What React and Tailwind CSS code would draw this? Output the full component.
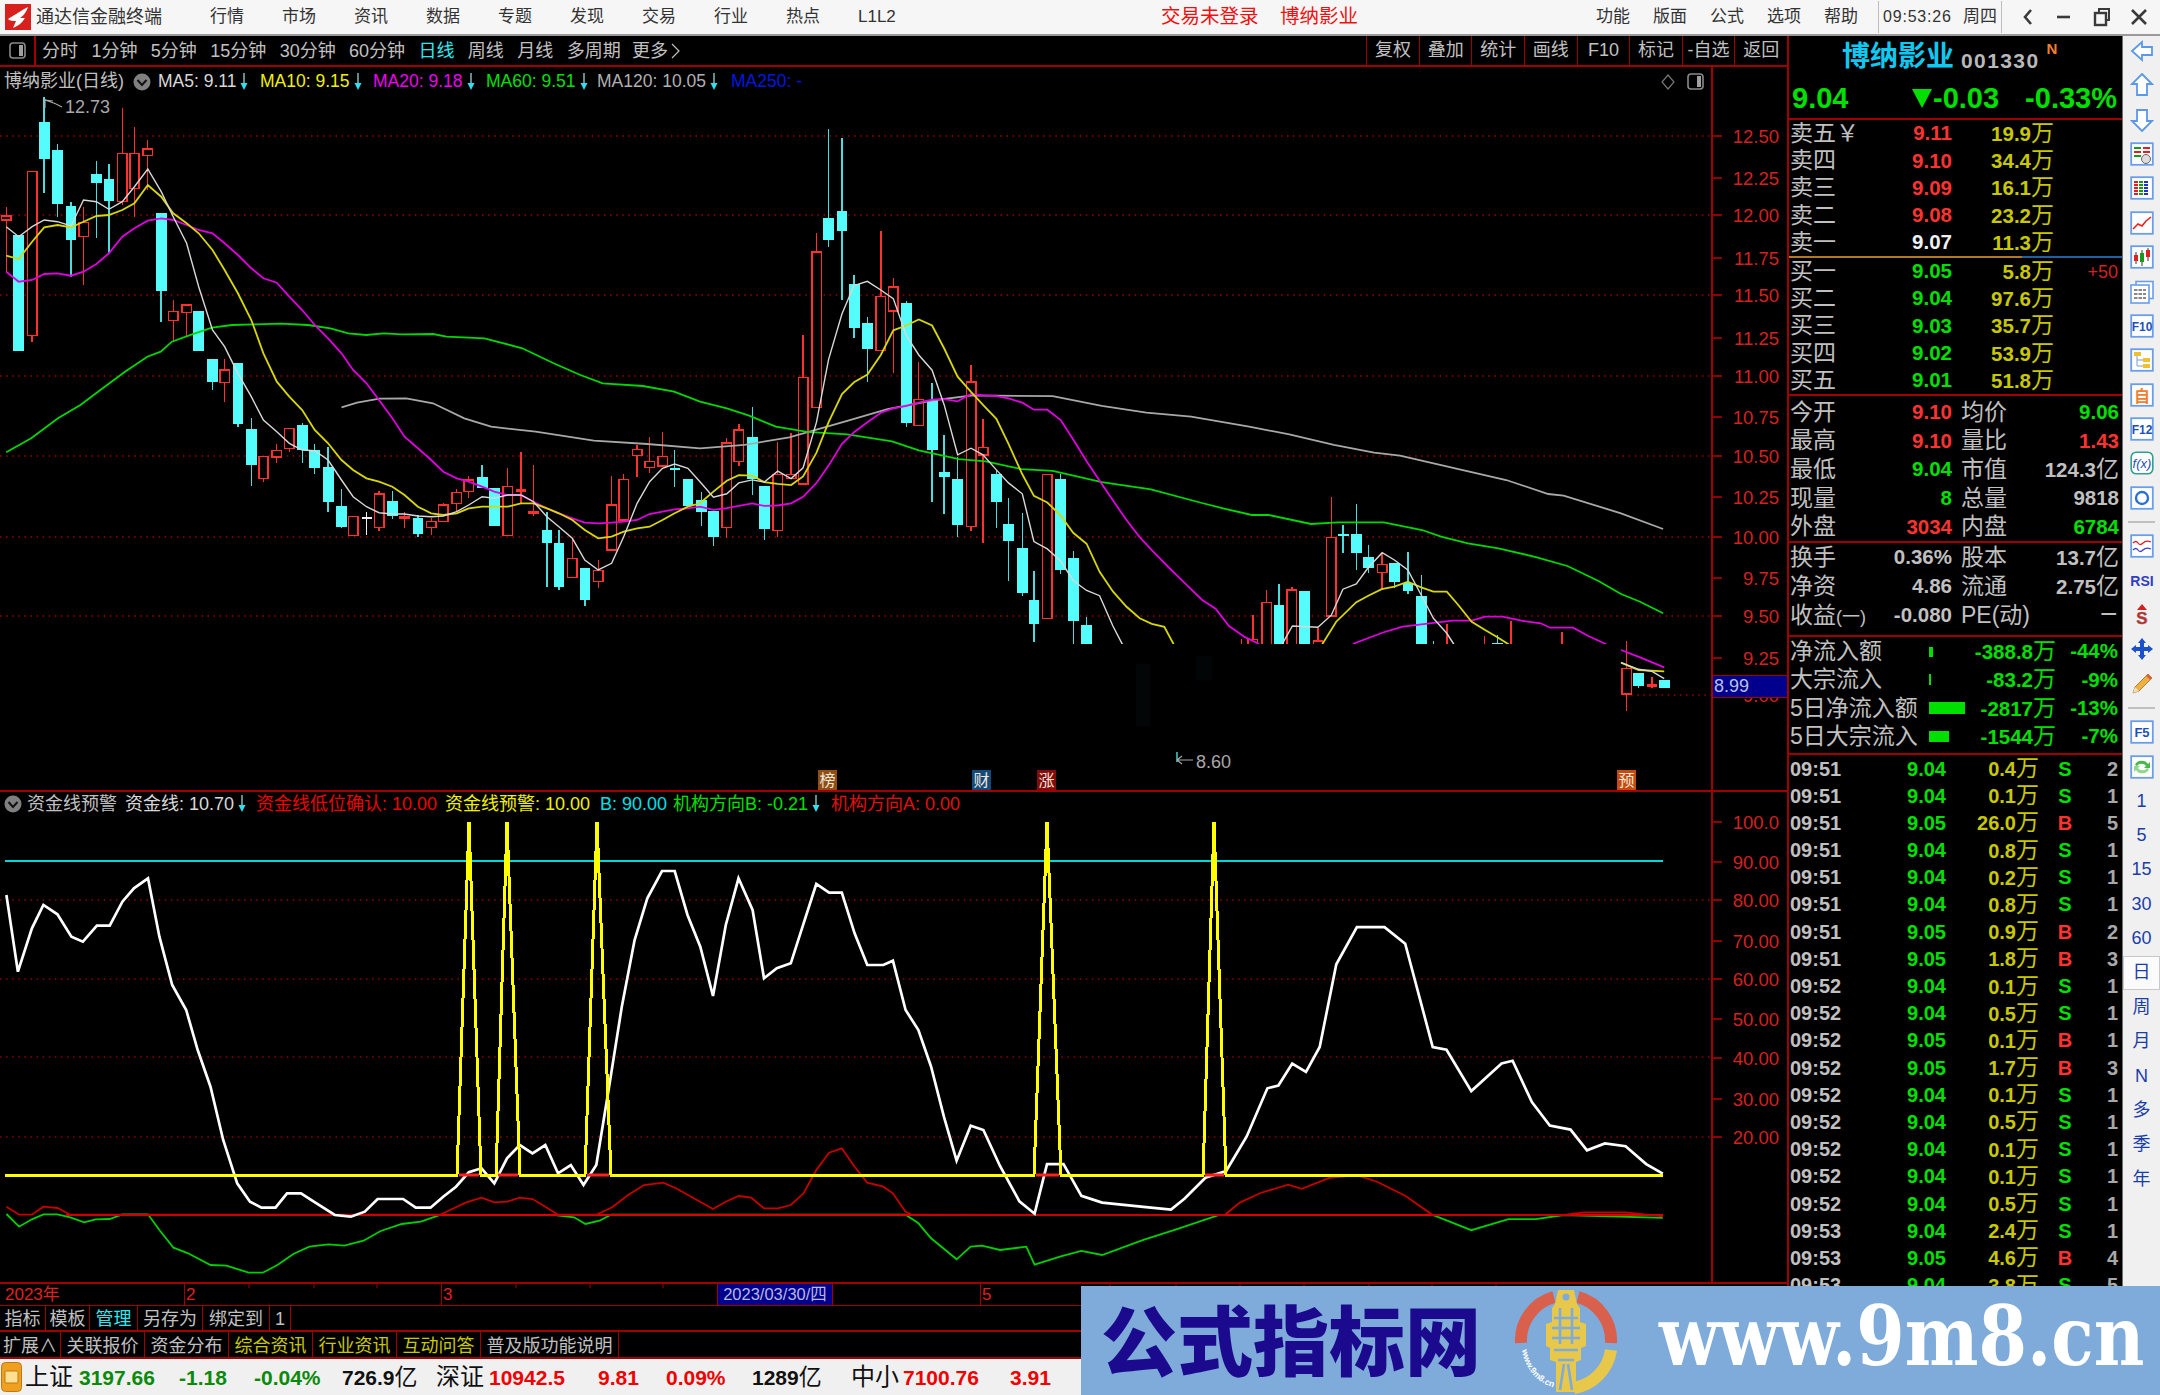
import React from "react";

const z8 = (a) => a.map(([x, y]) => [x / 2.24, 90 + y / 3]);
const z9 = (a) => a.map(([x, y]) => [700 + x / 2.24, 110 + y / 2.306]);
const z11 = (a) => a.map(([x, y]) => [1200 + x / 2.613, 480 + y / 3]);
const z12 = (a) => a.map(([x, y]) => [x / 1.568, 800 + y / 3]);
const sm = (a) => a.map(([x, y]) => [x * 1.3776, y * 1.3776]);
const pts = (a) => a.map(([x, y]) => `${x.toFixed(1)},${y.toFixed(1)}`).join(" ");

// x, high, top, bottom, low, colour
const c8 = [
  [14,352,378,390,545,"r"],[42,435,435,783,783,"c"],[72,245,245,737,755,"r"],[99,20,95,206,310,"c"],[129,162,181,342,382,"c"],[159,335,348,450,562,"c"],[187,350,398,440,585,"r"],[216,212,252,279,445,"c"],[244,222,266,333,490,"c"],[274,55,191,335,345,"r"],[301,110,191,295,382,"r"],[331,150,177,196,300,"r"],[361,370,370,603,697,"c"],[388,630,664,691,755,"r"],[418,645,645,668,740,"r"],[445,662,662,783,783,"c"],[476,807,807,877,900,"c"],[503,808,840,877,935,"r"],[533,820,820,1003,1012,"c"],[563,983,1018,1125,1188,"c"],[590,1100,1100,1166,1175,"r"],[620,1063,1082,1101,1120,"r"],[648,1015,1015,1075,1085,"r"],[677,1000,1004,1081,1120,"c"],[705,1063,1081,1134,1152,"c"],[735,1072,1131,1237,1265,"c"],[765,1198,1248,1310,1315,"c"],[791,1280,1280,1336,1336,"r"],[821,1265,1285,1285,1336,"w"],[849,1203,1212,1313,1322,"r"],[879,1202,1234,1278,1287,"c"],[906,1265,1282,1282,1314,"r"],[936,1275,1284,1333,1340,"c"],[966,1285,1295,1312,1335,"r"],[993,1240,1245,1295,1295,"r"],[1023,1197,1208,1241,1267,"r"],[1050,1158,1170,1204,1225,"r"],[1080,1125,1162,1193,1193,"c"],[1107,1194,1194,1308,1308,"c"],[1137,1135,1190,1336,1336,"r"],[1167,1085,1200,1200,1240,"r"],[1195,1125,1265,1265,1278,"r"],[1225,1265,1320,1358,1490,"c"],[1252,1320,1360,1490,1500,"c"],[1282,1345,1406,1462,1465,"r"],[1310,1433,1433,1530,1548,"c"],[1340,1410,1442,1475,1495,"r"],[1370,1158,1245,1380,1380,"r"],[1397,1152,1168,1290,1290,"r"],[1427,1065,1078,1097,1160,"r"],[1455,1040,1115,1132,1148,"r"],[1484,1027,1100,1128,1130,"r"],[1511,1080,1136,1136,1192,"c"],[1541,1167,1167,1247,1252,"c"],
];
const c9 = [
  [3,880,900,926,960,"c"],[30,925,925,985,1005,"c"],[60,757,768,963,988,"r"],[87,725,738,810,822,"r"],[117,685,754,850,888,"c"],[144,867,867,967,992,"c"],[174,765,840,970,985,"r"],[204,745,840,850,850,"r"],[231,518,617,862,862,"r"],[261,283,328,686,686,"r"],[288,44,249,300,317,"c"],[318,65,232,278,437,"c"],[345,380,401,503,525,"c"],[375,477,491,551,628,"c"],[405,280,430,555,555,"r"],[433,387,408,464,607,"r"],[462,440,446,722,732,"c"],[490,580,668,728,728,"r"],[520,630,668,784,905,"c"],[547,750,834,846,932,"c"],[577,800,851,957,985,"c"],[607,588,627,960,970,"r"],[634,712,778,796,998,"r"],[664,830,840,905,964,"c"],[691,895,955,995,1085,"c"],[722,930,1010,1113,1120,"c"],[748,1062,1131,1185,1227,"c"],[778,841,841,1173,1173,"r"],[808,840,851,1060,1070,"c"],[836,1017,1034,1178,1240,"c"],[866,1168,1187,1260,1260,"c"],
];
const c11 = [
  [108,478,500,500,500,"r"],[138,405,478,510,510,"r"],[174,330,367,510,510,"r"],[206,312,375,510,510,"c"],[240,320,330,510,510,"r"],[272,334,334,510,510,"c"],[308,445,483,510,510,"r"],[343,50,173,408,408,"r"],[374,135,164,164,220,"c"],[409,72,163,220,270,"c"],[441,195,231,265,280,"c"],[476,218,254,277,330,"r"],[508,249,249,306,325,"c"],[543,217,308,332,342,"c"],[578,285,347,510,510,"c"],[610,483,510,510,510,"c"],[645,432,510,510,510,"r"],[743,468,510,510,510,"r"],[778,465,488,510,510,"c"],[813,424,510,510,510,"r"],[946,455,510,510,510,"r"],[1115,482,565,642,692,"r"],[1146,578,578,617,625,"c"],[1181,590,616,616,625,"r"],[1213,600,600,625,625,"c"],
];
const cx = (a, fx, fy) => a.map(([x, h, t, b, l, k]) => ({ x: fx(x), h: fy(h), t: fy(t), b: fy(b), l: fy(l), k }));
const candles = [
  ...cx(c8, (x) => x / 2.24, (y) => 90 + y / 3),
  ...cx(c9, (x) => 700 + x / 2.24, (y) => 110 + y / 2.306),
  ...cx(c11, (x) => 1200 + x / 2.613, (y) => 480 + y / 3),
];

const ma5 = [
  [...z8([[14,410],[42,440],[72,410],[99,390],[129,395],[159,408],[187,330],[216,335],[244,358],[274,335],[301,290],[331,237],[361,305],[388,380],[418,460],[445,590],[476,720],[503,770],[533,850],[563,920],[590,990],[620,1025],[648,1060],[677,1080],[705,1082],[735,1110],[765,1170],[791,1220],[821,1250],[849,1268],[879,1272],[906,1272],[936,1278],[966,1280],[993,1278],[1023,1265],[1050,1245],[1080,1220],[1107,1225],[1137,1215],[1167,1215],[1195,1235],[1225,1280],[1252,1310],[1282,1345],[1310,1410],[1340,1440],[1370,1420],[1397,1340],[1427,1240],[1455,1175],[1484,1135],[1511,1122],[1541,1135],[1568,1175]]),
   ...z9([[30,893],[60,885],[87,860],[117,853],[144,858],[174,833],[204,850],[231,825],[261,720],[288,575],[318,470],[345,405],[375,395],[405,415],[433,435],[462,520],[490,565],[520,600],[547,680],[577,795],[607,780],[634,795],[664,830],[691,860],[722,885],[748,995],[778,1012],[808,1040],[836,1085],[866,1108],[895,1120],[925,1190],[945,1230],[960,1260]])],
  [...z9([[1290,1260],[1305,1230],[1327,1190],[1384,1193],[1414,1165],[1440,1105],[1470,1093],[1497,1055]]),
   ...z11([[476,218],[508,240],[543,270],[578,345],[610,415],[645,460],[663,492],[675,510]])],
  z11([[1100,548],[1146,568],[1181,574],[1213,596]]),
];
const ma10 = [
  [...z8([[14,497],[42,507],[72,455],[99,412],[129,405],[159,412],[187,395],[216,378],[244,375],[274,360],[301,340],[331,285],[361,320],[388,370],[418,400],[445,430],[476,480],[503,540],[533,610],[563,690],[590,790],[620,875],[648,920],[677,960],[705,1020],[735,1060],[765,1110],[791,1140],[821,1165],[849,1175],[879,1190],[906,1215],[936,1250],[966,1270],[993,1275],[1023,1270],[1050,1255],[1080,1250],[1107,1250],[1137,1250],[1167,1240],[1195,1240],[1225,1255],[1252,1270],[1282,1290],[1310,1320],[1340,1345],[1370,1340],[1397,1325],[1427,1315],[1455,1310],[1484,1290],[1511,1270],[1541,1250],[1568,1240]]),
   ...z9([[30,880],[60,855],[87,842],[117,843],[144,858],[174,862],[204,865],[231,845],[261,790],[288,720],[318,655],[345,628],[375,610],[405,565],[433,508],[462,497],[490,483],[520,497],[547,550],[577,615],[607,650],[634,680],[664,712],[691,770],[722,840],[748,890],[778,905],[808,935],[836,975],[866,1000],[895,1065],[925,1110],[955,1145],[985,1172],[1012,1185],[1040,1192],[1060,1230],[1070,1260]])],
  [...z9([[1380,1260],[1395,1230],[1425,1180],[1470,1135],[1497,1120],[1527,1105]]),
   ...z11([[508,320],[543,305],[578,322],[610,335],[645,335],[675,375],[710,425],[745,450],[775,470],[805,492],[825,510]])],
  z11([[1100,548],[1146,570],[1213,574]]),
];
const ma20 = [
  [...z8([[14,545],[42,575],[72,570],[99,552],[129,550],[159,557],[187,545],[216,522],[244,490],[274,440],[301,415],[331,392],[361,385],[388,390],[418,405],[445,420],[476,430],[503,460],[533,495],[563,535],[590,565],[620,578],[648,620],[677,660],[705,705],[735,745],[765,790],[791,840],[821,880],[849,930],[879,985],[906,1040],[936,1075],[966,1110],[993,1145],[1023,1165],[1050,1175],[1080,1190],[1107,1205],[1137,1215],[1167,1215],[1195,1235],[1225,1255],[1252,1270],[1282,1285],[1310,1298],[1340,1300],[1370,1298],[1397,1295],[1427,1290],[1455,1272],[1484,1265],[1511,1258],[1541,1255],[1568,1250]]),
   ...z9([[30,922],[60,918],[117,907],[144,913],[174,912],[204,907],[231,892],[261,860],[288,820],[318,770],[345,743],[375,720],[405,698],[433,688],[462,682],[490,675],[520,668],[547,667],[577,672],[607,655],[634,658],[664,660],[691,665],[722,675],[748,691],[778,691],[808,715],[836,760],[866,810],[895,855],[925,900],[955,945],[985,985],[1012,1015],[1050,1055],[1090,1095],[1125,1130],[1155,1150],[1185,1190],[1220,1215],[1250,1230],[1280,1260]])],
  [...z9([[1440,1260],[1465,1230],[1530,1205]]),
   ...z11([[530,440],[600,430],[660,422],[710,422],[745,410],[790,410],[840,422],[890,430],[915,443],[975,443],[1015,468],[1060,492],[1090,510]])],
  z11([[1100,510],[1150,532],[1213,562]]),
];
const ma60 = [[...z8([[14,1087],[70,1045],[130,985],[180,945],[230,895],[280,845],[330,800],[360,785],[385,755],[430,733],[475,713],[520,705],[570,703],[630,701],[690,705],[740,715],[780,730],[820,735],[860,730],[900,733],[970,732],[1000,740],[1085,745],[1170,775],[1240,820],[1300,855],[1350,880],[1440,888],[1510,905],[1568,935]]),
  ...z9([[60,688],[110,705],[170,730],[240,742],[330,748],[430,764],[490,785],[580,805],[640,810],[720,828],[790,832],[900,858],[1010,875],[1120,905]]),
  ...z11([[60,85],[135,105],[180,105],[290,132],[360,127],[480,127],[580,150],[630,170],[700,190],[780,205],[880,232],[960,258],[1040,302],[1100,342],[1150,365],[1210,400]])]];
const ma120 = [[...z8([[765,952],[800,938],[850,926],[910,925],[970,940],[1040,985],[1100,1010],[1200,1025],[1330,1052],[1450,1062],[1568,1075]]),
  ...z9([[100,772],[200,755],[320,720],[420,690],[520,670],[610,658],[790,660],[900,682],[1000,698],[1100,707],[1230,730],[1320,748],[1420,772],[1510,790],[1568,797]]),
  ...z11([[800,0],[910,42],[950,47],[1100,100],[1210,147]])]];

const iWhite = [...z12([[10,285],[28,515],[50,385],[68,315],[90,343],[112,410],[130,425],[152,377],[172,377],[192,305],[210,265],[232,235],[250,410],[270,555],[292,630],[310,750],[330,860],[350,1020],[372,1150],[392,1205],[410,1223],[432,1223],[450,1180],[472,1180],[492,1205],[525,1245],[550,1250],[572,1235],[592,1197],[632,1197],[652,1223],[675,1223],[695,1190],[715,1160],[735,1117],[755,1105],[775,1150],[795,1075],[815,1035],[835,1060],[855,1035],[875,1120],[895,1095],[915,1155],[935,1095],[955,860],[975,620],[995,420],[1015,295],[1038,213],[1058,213],[1078,345],[1098,440],[1118,588],[1138,375],[1158,235],[1180,330],[1198,535],[1218,505],[1240,490],[1260,370],[1280,252],[1300,278],[1320,278],[1340,400],[1360,495],[1385,495],[1400,482],[1420,630],[1440,690],[1460,800],[1480,950],[1500,1082],[1522,977],[1542,990],[1568,1098]]),
  ...sm([[740,872],[751,881],[760,845],[772,845],[785,868],[800,873],[830,876],[850,878],[860,870],[875,855],[890,850],[905,825],[920,790],[928,788],[938,772],[948,778],[958,760],[970,700],[985,673],[1005,673],[1020,685],[1040,760],[1050,762],[1068,792],[1090,772],[1098,770],[1112,800],[1125,817],[1140,820],[1152,835],[1165,830],[1180,832],[1195,845],[1207,852]])];
const iRed = [...z12([[10,1220],[30,1244],[50,1244],[68,1220],[90,1224],[110,1244],[690,1244],[700,1235],[730,1208],[755,1193],[775,1207],[795,1205],[815,1193],[835,1197],[855,1220],[875,1244],[935,1244],[960,1222],[985,1185],[1010,1155],[1040,1148],[1060,1165],[1118,1227],[1138,1205],[1158,1188],[1178,1193],[1198,1225],[1220,1225],[1240,1215],[1260,1180],[1280,1110],[1300,1058],[1320,1045],[1340,1100],[1360,1148],[1385,1160],[1400,1180],[1420,1235],[1430,1244]]),
  ...sm([[889,882],[900,873],[915,866],[935,860],[945,863],[965,855],[985,853],[1000,858],[1020,868],[1040,882],[1135,882],[1150,880],[1180,880],[1207,883]])];
const iGreen = [...z12([[10,1242],[30,1280],[50,1258],[68,1243],[90,1243],[110,1252],[132,1267],[150,1258],[172,1257],[192,1243],[232,1243],[250,1290],[272,1343],[295,1360],[330,1395],[355,1397],[390,1418],[412,1418],[435,1395],[460,1362],[485,1340],[515,1333],[540,1337],[570,1322],[597,1293],[630,1272],[660,1265],[690,1245],[870,1245],[900,1252],[918,1272],[940,1262],[958,1244],[1420,1244],[1440,1270],[1460,1315],[1500,1378],[1522,1340],[1540,1337],[1568,1350]]),
  ...sm([[745,905],[751,918],[770,912],[785,908],[800,911],[830,900],[855,892],[885,882],[1040,882],[1068,893],[1095,885],[1115,885],[1135,882],[1207,884]])];
const spikes = [[457,469,481],[496,507,520],[585,597,611],[1034,1047,1061],[1203,1214,1226]];
const yellowPts = [[5,1175]];
spikes.forEach(([a, b, c]) => { yellowPts.push([a, 1175], [b, 822], [c, 1175]); });
yellowPts.push([1663, 1175]);

const priceTicks = [[136,"12.50"],[178,"12.25"],[215,"12.00"],[258,"11.75"],[295,"11.50"],[338,"11.25"],[376,"11.00"],[417,"10.75"],[456,"10.50"],[497,"10.25"],[537,"10.00"],[578,"9.75"],[616,"9.50"],[658,"9.25"],[695,"9.00"]];
const priceGrid = [136,215,295,376,456,537,616];
const indTicks = [[822,"100.0"],[862,"90.00"],[900,"80.00"],[941,"70.00"],[979,"60.00"],[1019,"50.00"],[1058,"40.00"],[1099,"30.00"],[1137,"20.00"]];
const indGrid = [900,979,1057,1137];

const MA = ({ lines, color, w = 1.8 }) => lines.map((l, i) => <polyline key={i} points={pts(l)} fill="none" stroke={color} strokeWidth={w} />);

function Candle({ c }) {
  const col = c.k === "r" ? "#ff3030" : c.k === "c" ? "#54fcfc" : "#f0f0f0";
  const flat = c.b - c.t < 1;
  return (
    <g shapeRendering="crispEdges">
      <line x1={c.x} x2={c.x} y1={c.h} y2={c.l} stroke={c.k === "c" ? "#4cdcdc" : col} strokeWidth="1.4" />
      {flat ? (
        <rect x={c.x - 5} y={c.t - 1} width="10.5" height={c.k === "r" ? 3 : 2} fill={col} />
      ) : c.k === "r" ? (
        <rect x={c.x - 4.6} y={c.t} width="9.4" height={c.b - c.t} fill="#000" stroke={col} strokeWidth="1.5" />
      ) : (
        <rect x={c.x - 5.3} y={c.t} width="10.8" height={c.b - c.t} fill={col} />
      )}
    </g>
  );
}

function Badge({ x, w = 19, color, t }) {
  return (
    <g>
      <rect x={x} y="770" width={w} height="20" fill={color} />
      <text x={x + w / 2} y="786" fontSize="16" textAnchor="middle" fill="#f4e6d8">{t}</text>
    </g>
  );
}

function MainChart() {
  return (
    <svg viewBox="0 96 1711 694" className="w-[1711px] h-[694px] block">
      {priceGrid.map((y) => <line key={y} x1="0" x2="1711" y1={y} y2={y} stroke="#a00000" strokeWidth="1.4" strokeDasharray="1.5 4.6" />)}
      <line x1="1625" x2="1711" y1="695" y2="695" stroke="#a00000" strokeWidth="1.4" strokeDasharray="1.5 4.6" />
      {candles.map((c, i) => <Candle key={i} c={c} />)}
      <MA lines={ma120} color="#a8a8a8" />
      <MA lines={ma60} color="#00d800" />
      <MA lines={ma20} color="#e000e0" />
      <MA lines={ma10} color="#d8d800" />
      <MA lines={ma5} color="#d8d8d8" w={1.4} />
      <rect x="1060" y="644" width="560" height="108" fill="#000" />
      <rect x="1136" y="664" width="14" height="62" fill="#020606" />
      <rect x="1196" y="656" width="16" height="24" fill="#020505" />
      <line x1="1177" x2="1177" y1="752" y2="762" stroke="#4cdcdc" strokeWidth="1.4" />
      <path d="M45 100 l0 8 M45 100 l8 1 M45 100 Q55 103 62 107" stroke="#a8a8a8" strokeWidth="1.2" fill="none" />
      <text x="65" y="113" fontSize="18" fill="#a8a8a8">12.73</text>
      <path d="M1177 760 l5 -4 M1177 760 l5 4 M1177 760 H1193" stroke="#a8a8a8" strokeWidth="1.2" fill="none" />
      <text x="1196" y="768" fontSize="18" fill="#a8a8a8">8.60</text>
      <Badge x={818} color="#8e4e14" t="榜" />
      <Badge x={972} color="#134a7c" t="财" />
      <Badge x={1037} color="#820c0c" t="涨" />
      <Badge x={1617} color="#c44c10" t="预" />
    </svg>
  );
}

function IndicatorChart() {
  return (
    <svg viewBox="0 816 1711 466" className="w-[1711px] h-[466px] block">
      {indGrid.map((y) => <line key={y} x1="0" x2="1711" y1={y} y2={y} stroke="#900000" strokeWidth="1.3" strokeDasharray="1.5 4.6" />)}
      <polyline points={pts(iGreen)} fill="none" stroke="#00d000" strokeWidth="1.8" />
      <line x1="66" x2="1663" y1="1215" y2="1215" stroke="#e00000" strokeWidth="2" />
      <polyline points={pts(iRed)} fill="none" stroke="#c80000" strokeWidth="1.8" />
      <polyline points={pts(iWhite)} fill="none" stroke="#ffffff" strokeWidth="2.7" />
      <line x1="5" x2="1663" y1="861" y2="861" stroke="#00d8d8" strokeWidth="2.2" />
      <polyline points={pts(yellowPts)} fill="none" stroke="#ffff00" strokeWidth="3" shapeRendering="crispEdges" />
      {spikes.map(([a, , c], i) => <line key={i} x1={a + 2} x2={c - 2} y1="1175" y2="1175" stroke="#ff2020" strokeWidth="3" />)}
    </svg>
  );
}

function Axis({ vb, h, ticks }) {
  return (
    <svg viewBox={vb} className="w-[76px] block" height={h}>
      {ticks.map(([y, t]) => (
        <g key={t}>
          <line x1="1711" x2="1720" y1={y} y2={y} stroke="#b00000" strokeWidth="1.6" />
          <text x="1777" y={y + 6.5} fontSize="18.5" textAnchor="end" fill="#d42020">{t}</text>
        </g>
      ))}
    </svg>
  );
}

const DownArrow = () => (
  <svg width="8" height="18" viewBox="0 0 8 18" className="shrink-0 ml-[4px]">
    <path d="M4 0V11" stroke="#a8e8e8" strokeWidth="1.2" />
    <path d="M0.5 10H7.5L4 17Z" fill="#30e0f0" />
  </svg>
);
const Drop = () => (
  <svg width="18" height="18" viewBox="0 0 18 18" className="shrink-0">
    <circle cx="9" cy="9" r="8.5" fill="#808080" />
    <path d="M4.5 7L9 12L13.5 7" stroke="#111" strokeWidth="2" fill="none" />
  </svg>
);
const PanelToggle = () => (
  <svg width="17" height="17" viewBox="0 0 17 17" className="shrink-0">
    <rect x="1" y="1" width="15" height="15" rx="3" fill="none" stroke="#8a8a8a" strokeWidth="1.6" />
    <rect x="10" y="3" width="4" height="11" fill="#a0a0a0" />
  </svg>
);

function TitleLogo() {
  return (
    <svg width="26" height="26" viewBox="0 0 26 26" className="shrink-0">
      <rect width="26" height="26" fill="#d8201c" />
      <path d="M3 15 C8 12 12 9 23 3 C21 9 18 12 15 14 L20 14 C17 19 13 22 8 24 L11 17 C8 17 5 17 3 15Z" fill="#fff" />
    </svg>
  );
}

const WinIcon = ({ children, cls }) => (
  <svg width="20" height="20" viewBox="0 0 20 20" className={cls} fill="none" stroke="#3a3a3a" strokeWidth="2.6">{children}</svg>
);

function TitleBar() {
  const menu = ["行情", "市场", "资讯", "数据", "专题", "发现", "交易", "行业", "热点"];
  const rmenu = ["功能", "版面", "公式", "选项", "帮助"];
  return (
    <div className="flex items-center h-[36px] bg-[#f6f6f6] border-b-2 border-[#9a9a9a] text-[#333] text-[17px] shrink-0">
      <div className="ml-[5px] w-[31px]"><TitleLogo /></div>
      <div className="w-[174px] text-[18px] shrink-0">通达信金融终端</div>
      {menu.map((m) => <div key={m} className="w-[72px] shrink-0">{m}</div>)}
      <div className="w-[303px] shrink-0">L1L2</div>
      <div className="w-[119px] shrink-0 text-[19.5px] text-[#f01010]">交易未登录</div>
      <div className="w-[316px] shrink-0 text-[19.5px] text-[#f01010]">博纳影业</div>
      {rmenu.map((m) => <div key={m} className="w-[57px] shrink-0">{m}</div>)}
      <div className="flex items-center h-[32px] w-[124px] shrink-0 ml-[-3px] border-x border-[#bdbdbd] pl-[4px]">
        <span className="text-[16px] tracking-[0.8px] w-[80px]">09:53:26</span>
        <span>周四</span>
      </div>
      <WinIcon cls="ml-[16px]"><path d="M13 3L7 10L13 17" /></WinIcon>
      <WinIcon cls="ml-[16px]"><path d="M3 10H16" /></WinIcon>
      <WinIcon cls="ml-[18px]"><path d="M7 5V2H17V13H14" strokeWidth="2" /><rect x="3" y="6" width="11" height="12" strokeWidth="2.4" /></WinIcon>
      <WinIcon cls="ml-[17px]"><path d="M3 3L17 17M17 3L3 17" /></WinIcon>
    </div>
  );
}

function Toolbar() {
  const left = ["分时", "1分钟", "5分钟", "15分钟", "30分钟", "60分钟", "日线", "周线", "月线", "多周期"];
  const right = ["复权", "叠加", "统计", "画线", "F10", "标记", "-自选", "返回"];
  return (
    <div className="flex h-[31px] shrink-0 border-b-2 border-[#a00000] text-[18px] text-[#c0c0c0]">
      <div className="w-[36px] border-r-2 border-[#a00000] flex items-center justify-center"><PanelToggle /></div>
      <div className="flex items-center gap-[13.4px] pl-[6px] pt-[1px]">
        {left.map((t) => <span key={t} className={t === "日线" ? "text-[#30e8f0]" : ""}>{t}</span>)}
        <span className="-ml-[2px] flex items-center">更多
          <svg width="9" height="16" viewBox="0 0 9 16" className="ml-[3px]"><path d="M1 1L8 8L1 15" stroke="#c0c0c0" strokeWidth="1.2" fill="none" /></svg>
        </span>
      </div>
      <div className="ml-auto flex">
        {right.map((t) => <div key={t} className="w-[52.6px] border-l border-[#a00000] flex items-center justify-center">{t}</div>)}
      </div>
    </div>
  );
}

function Legend() {
  return (
    <div className="flex items-center h-[29px] text-[17.5px] pl-[4px] whitespace-nowrap">
      <span className="w-[129px] text-[18px] text-[#c0c0c0] shrink-0">博纳影业(日线)</span>
      <div className="w-[25px] shrink-0"><Drop /></div>
      <div className="flex items-center w-[102px] shrink-0 text-[#d8d8d8]">MA5: 9.11<DownArrow /></div>
      <div className="flex items-center w-[113px] shrink-0 text-[#f0f000]">MA10: 9.15<DownArrow /></div>
      <div className="flex items-center w-[113px] shrink-0 text-[#f000f0]">MA20: 9.18<DownArrow /></div>
      <div className="flex items-center w-[111px] shrink-0 text-[#00e000]">MA60: 9.51<DownArrow /></div>
      <div className="flex items-center w-[134px] shrink-0 text-[#b0b0b0]">MA120: 10.05<DownArrow /></div>
      <span className="text-[#0018e0]">MA250: -</span>
      <div className="ml-auto flex items-center pr-[7px] gap-[12px]">
        <svg width="14" height="16" viewBox="0 0 14 16"><path d="M7 1L13 8L7 15L1 8Z" fill="none" stroke="#777" strokeWidth="1.2" /></svg>
        <PanelToggle />
      </div>
    </div>
  );
}

function IndLegend() {
  return (
    <div className="flex items-center h-[24px] text-[18px] pl-[4px] whitespace-nowrap">
      <div className="w-[23px] shrink-0"><Drop /></div>
      <span className="w-[98px] shrink-0 text-[#c0c0c0]">资金线预警</span>
      <div className="flex items-center w-[131px] shrink-0 text-[#d8d8d8]">资金线: 10.70<DownArrow /></div>
      <span className="w-[189px] shrink-0 text-[#f00000]">资金线低位确认: 10.00</span>
      <span className="w-[155px] shrink-0 text-[#f0f000]">资金线预警: 10.00</span>
      <span className="w-[73px] shrink-0 text-[#00e0e8]">B: 90.00</span>
      <div className="flex items-center w-[158px] shrink-0 text-[#00e000]">机构方向B: -0.21<DownArrow /></div>
      <span className="text-[#e01010]">机构方向A: 0.00</span>
    </div>
  );
}

function DateRow() {
  return (
    <div className="relative flex h-[22px] border-b border-[#a00000] text-[17px] text-[#e02020] leading-[21px] shrink-0">
      <div className="w-[185px] pl-[5px] border-r border-[#a00000]">2023年</div>
      <div className="w-[257px] pl-[1px] border-r border-[#a00000]">2</div>
      <div className="w-[275px] pl-[1px]">3</div>
      <div className="w-[116px] bg-[#00008c] border-x border-[#a00000] text-[#b8b8e0] text-[16.5px] text-center">2023/03/30/四</div>
      <div className="w-[148px] border-r border-[#a00000]" />
      <div className="pl-[1px]">5</div>
      <svg width="1787" height="4" viewBox="0 0 1787 4" className="absolute left-0 top-0">
        {[249,314,377,516,590,663,1110,1176,1240,1304,1369,1432,1496].map((x) => <line key={x} x1={x} x2={x} y1="0" y2="4" stroke="#a00000" />)}
      </svg>
    </div>
  );
}

function TabRow({ items, h, pad }) {
  return (
    <div className={`flex ${h} border-b-2 border-[#a00000] text-[18px] text-[#c0c0c0] shrink-0`}>
      {items.map(([t, w, c]) => (
        <div key={t} className={`${w} ${c || ""} ${pad} border-r border-[#a00000] flex items-center justify-center shrink-0 whitespace-nowrap`}>{t}</div>
      ))}
    </div>
  );
}

const Wan = ({ n, unit = "万" }) => <span>{n}<span className="text-[23px] font-normal">{unit}</span></span>;

function Book({ rows }) {
  return rows.map(([l, p, v, c, extra]) => (
    <div key={l} className="flex items-center h-[27.2px] pl-[1px] pr-[4px] shrink-0">
      <span className="w-[76px] text-[23px] text-[#c0c0c0] shrink-0">{l}</span>
      <span className={`w-[86px] text-right font-bold ${c}`}>{p}</span>
      <span className="w-[102px] text-right text-[#c8c800] font-bold"><Wan n={v} /></span>
      <span className="flex-1 text-right text-[18px] text-[#d02020]">{extra}</span>
    </div>
  ));
}

function Quote({ rows }) {
  return rows.map(([a, b, bc, c, d, dc]) => (
    <div key={c} className="flex items-center h-[28.7px] pl-[1px] pr-[3px] shrink-0">
      <div className="w-[162px] flex items-center justify-between shrink-0">
        <span className="text-[23px] text-[#c0c0c0]">{a}</span>
        <span className={`font-bold ${bc}`}>{b}</span>
      </div>
      <div className="flex-1 ml-[9px] flex items-center justify-between">
        <span className="text-[23px] text-[#c0c0c0]">{c}</span>
        <span className={`font-bold ${dc}`}>{d}</span>
      </div>
    </div>
  ));
}

const trades = [
  ["09:51","9.04","0.4","S","2"],["09:51","9.04","0.1","S","1"],["09:51","9.05","26.0","B","5"],["09:51","9.04","0.8","S","1"],["09:51","9.04","0.2","S","1"],["09:51","9.04","0.8","S","1"],["09:51","9.05","0.9","B","2"],["09:51","9.05","1.8","B","3"],["09:52","9.04","0.1","S","1"],["09:52","9.04","0.5","S","1"],["09:52","9.05","0.1","B","1"],["09:52","9.05","1.7","B","3"],["09:52","9.04","0.1","S","1"],["09:52","9.04","0.5","S","1"],["09:52","9.04","0.1","S","1"],["09:52","9.04","0.1","S","1"],["09:52","9.04","0.5","S","1"],["09:53","9.04","2.4","S","1"],["09:53","9.05","4.6","B","4"],["09:53","9.04","3.8","S","5"],
];

function RightPanel() {
  const G = "text-[#00e000]", R = "text-[#ff3232]", W = "text-[#c0c0c0]";
  const flows = [
    ["净流入额", "w-[4px] h-[10px]", "-388.8", "-44%"],
    ["大宗流入", "w-[2px] h-[11px]", "-83.2", "-9%"],
    ["5日净流入额", "w-[36px] h-[12px]", "-2817", "-13%"],
    ["5日大宗流入", "w-[20px] h-[11px]", "-1544", "-7%"],
  ];
  return (
    <div className="w-[336px] shrink-0 border-l-2 border-[#a00000] border-r border-r-[#707070] flex flex-col text-[20.5px] leading-none overflow-hidden">
      <div className="h-[42px] flex items-center pl-[53px] shrink-0">
        <span className="text-[28px] font-bold text-[#10c8f0] leading-none">博纳影业</span>
        <span className="ml-[7px] mt-[7px] text-[#b8b8b8] text-[21px] tracking-[1.4px] font-bold">001330</span>
        <span className="ml-[7px] -mt-[18px] text-[#f08030] text-[15px] font-bold">N</span>
      </div>
      <div className="h-[42px] flex items-center pl-[3px] pr-[5px] shrink-0 border-b-2 border-[#a00000] text-[29px] font-bold text-[#00e000]">
        <span className="w-[120px]">9.04</span>
        <svg width="20" height="19" viewBox="0 0 20 19" className="shrink-0"><path d="M0 0H20L10 19Z" fill="#00e000" /></svg>
        <span className="ml-[1px]">-0.03</span>
        <span className="ml-auto">-0.33%</span>
      </div>
      <Book rows={[
        ["卖五￥","9.11","19.9",R],["卖四","9.10","34.4",R],["卖三","9.09","16.1",R],["卖二","9.08","23.2",R],["卖一","9.07","11.3","text-[#f0f0f0]"],
      ]} />
      <div className="h-[2px] flex shrink-0"><div className="w-[233px] bg-[#b07820]" /><div className="flex-1 bg-[#2060a0]" /></div>
      <Book rows={[
        ["买一","9.05","5.8",G,"+50"],["买二","9.04","97.6",G],["买三","9.03","35.7",G],["买四","9.02","53.9",G],["买五","9.01","51.8",G],
      ]} />
      <div className="h-[2px] bg-[#a00000] shrink-0" />
      <div className="h-[2px] shrink-0" />
      <Quote rows={[
        ["今开","9.10",R,"均价","9.06",G],["最高","9.10",R,"量比","1.43",R],["最低","9.04",G,"市值",<Wan n="124.3" unit="亿" />,W],["现量","8",G,"总量","9818",W],["外盘","3034",R,"内盘","6784",G],
      ]} />
      <div className="h-[2px] bg-[#a00000] shrink-0" />
      <Quote rows={[
        ["换手","0.36%",W,"股本",<Wan n="13.7" unit="亿" />,W],["净资","4.86",W,"流通",<Wan n="2.75" unit="亿" />,W],[<span>收益<span className="text-[18px]">(一)</span></span>,"-0.080",W,"PE(动)","－",W],
      ]} />
      <div className="h-[6px] shrink-0" />
      <div className="h-[2px] bg-[#a00000] shrink-0" />
      {flows.map(([l, b, v, p]) => (
        <div key={l} className="flex items-center h-[28.4px] pl-[1px] pr-[4px] text-[#00e000] shrink-0">
          <span className="w-[139px] text-[23px] text-[#c0c0c0] shrink-0 whitespace-nowrap">{l}</span>
          <div className={`${b} bg-[#00e000] shrink-0`} />
          <span className="ml-auto font-bold"><Wan n={v} /></span>
          <span className="w-[62px] text-right shrink-0 font-bold">{p}</span>
        </div>
      ))}
      <div className="h-[2px] shrink-0" />
      <div className="h-[2px] bg-[#a00000] shrink-0" />
      {trades.map(([t, p, v, s, n], i) => (
        <div key={i} className="flex items-center h-[27.2px] shrink-0 pl-[1px] pr-[4px] text-[20px] font-bold">
          <span className="w-[60px] text-[#c0c0c0] shrink-0">{t}</span>
          <span className="w-[96px] text-right shrink-0 text-[#00e000]">{p}</span>
          <span className="w-[93px] text-right shrink-0 text-[#c8c800]"><Wan n={v} /></span>
          <span className={`w-[52px] text-center shrink-0 ${s === "B" ? "text-[#ff3232]" : "text-[#00e000]"}`}>{s}</span>
          <span className="flex-1 text-right text-[#a8a8a8]">{n}</span>
        </div>
      ))}
    </div>
  );
}

function SideIcon({ k }) {
  const box = <rect x="1.2" y="1.2" width="21.6" height="21.6" fill="#fff" stroke="#6a9ee8" strokeWidth="1.8" />;
  const T = (t, fill = "#1e50b8", size = 13) => <text x="12" y="17" fontSize={size} textAnchor="middle" fill={fill} fontWeight="700">{t}</text>;
  const arrowS = { fill: "#fff", stroke: "#5c98ea", strokeWidth: 1.8 };
  const body = {
    left: <path d="M2 12L12 3V8H22V16H12V21Z" {...arrowS} />,
    up: <path d="M12 1L22 11H17V22H7V11H2Z" {...arrowS} />,
    down: <path d="M12 23L22 13H17V2H7V13H2Z" {...arrowS} />,
    list: <>{box}<rect x="4" y="5" width="7" height="2" fill="#1a9a1a" /><rect x="13" y="5" width="7" height="2" fill="#e02020" /><rect x="4" y="9" width="7" height="2" fill="#e02020" /><rect x="13" y="9" width="7" height="2" fill="#e02020" /><rect x="4" y="13" width="7" height="2" fill="#1a9a1a" /><circle cx="16" cy="17" r="4.5" fill="#ddd" stroke="#666" /></>,
    grid: <>{box}{[4,9,14].map((x, i) => [5,8,11,14,17].map((y) => <rect key={x + "" + y} x={x} y={y} width="4" height="2" fill={["#e02020","#1a9a1a","#2030d0"][i]} />))}</>,
    line: <>{box}<path d="M3 18L8 13L12 15L16 10L21 6" stroke="#e82020" strokeWidth="1.6" fill="none" /></>,
    candle: <>{box}<path d="M6 7V19M12 5V21M18 3V16" stroke="#333" /><rect x="4" y="10" width="4" height="6" fill="#e02020" /><rect x="10" y="8" width="4" height="9" fill="#1a9a1a" /><rect x="16" y="5" width="4" height="7" fill="#e02020" /></>,
    pages: <><rect x="6" y="1.5" width="17" height="17" fill="#fff" stroke="#6a9ee8" strokeWidth="1.6" /><rect x="1" y="5" width="18" height="18" fill="#fff" stroke="#6a9ee8" strokeWidth="1.6" /><path d="M4 10H16M4 14H16M4 18H16" stroke="#888" strokeWidth="2" strokeDasharray="3.5 1" /></>,
    F10: <>{box}{T("F10", "#1e50b8", 12)}</>,
    F12: <>{box}{T("F12", "#1e50b8", 12)}</>,
    F5: <>{box}{T("F5", "#1e50b8", 13)}</>,
    tree: <>{box}<path d="M7 8V18H13M7 12H13" stroke="#7aa0d0" fill="none" /><rect x="4" y="4" width="7" height="4" fill="#f0c030" /><rect x="13" y="10" width="7" height="4" fill="#f0c030" /><rect x="13" y="16" width="7" height="4" fill="#f0c030" /></>,
    zi: <>{box}<text x="12" y="18.5" fontSize="16" textAnchor="middle" fill="#f08030" fontWeight="700">自</text></>,
    fx: <><rect x="1.2" y="1.2" width="21.6" height="21.6" rx="5" fill="#fff" stroke="#30a090" strokeWidth="1.6" /><text x="12" y="17" fontSize="13" textAnchor="middle" fill="#1e50b8" fontStyle="italic">f(x)</text></>,
    circle: <>{box}<circle cx="12" cy="12" r="6" fill="none" stroke="#2a70d8" strokeWidth="2.4" /></>,
    wave: <>{box}<path d="M3 9Q6 6 8 9T13 9T21 8" stroke="#e02020" strokeWidth="1.3" fill="none" /><path d="M3 16Q6 13 8 16T13 16T21 15" stroke="#4040d0" strokeWidth="1.3" fill="none" /></>,
    RSI: <text x="12" y="17" fontSize="14" textAnchor="middle" fill="#3040c0" fontWeight="700">RSI</text>,
    S: <><path d="M12 1L17 7H7Z" fill="#d02020" /><text x="12" y="21" fontSize="17" textAnchor="middle" fill="#d02020" fontWeight="700" stroke="#777" strokeWidth="0.5">S</text></>,
    move: <><path d="M12 1L16 6H14V10H18V8L23 12L18 16V14H14V18H16L12 23L8 18H10V14H6V16L1 12L6 8V10H10V6H8Z" fill="#1a50c8" /></>,
    pencil: <><path d="M3 21L5 15L18 2L22 6L9 19Z" fill="#f0b040" stroke="#a07020" strokeWidth="0.8" /><path d="M3 21L5 15L9 19Z" fill="#f0e0c0" /><path d="M18 2L22 6L20 8L16 4Z" fill="#e06040" /></>,
    refresh: <>{box}<path d="M5 10A7 6 0 0 1 18 9L20 7V13H14L16 11A5 4 0 0 0 7 11Z" fill="#48b848" /><path d="M19 14A7 6 0 0 1 6 15L4 17V11H10L8 13A5 4 0 0 0 17 13Z" fill="#90d890" /></>,
  }[k];
  return <svg width="24" height="24" viewBox="0 0 24 24">{body}</svg>;
}

const SideItem = ({ k }) => <div className="h-[34.4px] flex items-center justify-center shrink-0"><SideIcon k={k} /></div>;
const SideSep = () => <div className="h-[14px] flex items-center px-[5px] shrink-0"><div className="h-[2px] w-full bg-[#c0c0c0]" /></div>;

function Sidebar() {
  const a = ["up","down","list","grid","line","candle","pages","F10","tree","zi","F12","fx","circle"];
  const b = ["wave","RSI","S","move","pencil"];
  const t = ["1","5","15","30","60","日","周","月","N","多","季","年"];
  return (
    <div className="flex-1 bg-[#f0f0f0] flex flex-col overflow-hidden">
      <div className="h-[30px] mb-[2px] flex items-center justify-center shrink-0"><SideIcon k="left" /></div>
      {a.map((k) => <SideItem key={k} k={k} />)}
      <SideSep />
      {b.map((k) => <SideItem key={k} k={k} />)}
      <SideSep />
      <SideItem k="F5" />
      <SideItem k="refresh" />
      {t.map((x) => (
        <div key={x} className={`h-[34.4px] flex items-center justify-center text-[18px] text-[#1a3ea8] shrink-0 ${x === "日" ? "bg-[#fbfbfb] border border-[#c8c8c8]" : ""}`}>{x}</div>
      ))}
    </div>
  );
}

function StatusBar() {
  const N = "text-[21px] font-bold";
  return (
    <div className="flex items-center h-[36px] bg-[#f0f0f0] shrink-0 leading-none whitespace-nowrap">
      <svg width="21" height="30" viewBox="0 0 21 30" className="ml-[1px] shrink-0">
        <rect x="0.5" y="0.5" width="20" height="29" rx="4" fill="#f0a020" stroke="#c07810" />
        <rect x="4" y="9" width="13" height="12" rx="1" fill="#ffe090" stroke="#c07810" />
      </svg>
      <span className="ml-[3px] w-[54px] text-[24px] text-[#111]">上证</span>
      <span className={`${N} w-[100px] text-[#0a8a0a]`}>3197.66</span>
      <span className={`${N} w-[75px] text-[#0a8a0a]`}>-1.18</span>
      <span className={`${N} w-[88px] text-[#0a8a0a]`}>-0.04%</span>
      <span className={`${N} w-[94px] text-[#111]`}><span>726.9</span><span className="text-[23px] font-normal">亿</span></span>
      <span className="w-[53px] text-[24px] text-[#111]">深证</span>
      <span className={`${N} w-[109px] text-[#f00000]`}>10942.5</span>
      <span className={`${N} w-[68px] text-[#f00000]`}>9.81</span>
      <span className={`${N} w-[86px] text-[#f00000]`}>0.09%</span>
      <span className={`${N} w-[99px] text-[#111]`}><span>1289</span><span className="text-[23px] font-normal">亿</span></span>
      <span className="w-[52px] text-[24px] text-[#111]">中小</span>
      <span className={`${N} w-[107px] text-[#f00000]`}>7100.76</span>
      <span className={`${N} text-[#f00000]`}>3.91</span>
    </div>
  );
}

function BannerLogo() {
  return (
    <svg width="104" height="106" viewBox="0 0 104 106" className="shrink-0">
      <path d="M7 55A45 45 0 0 1 40 9" fill="none" stroke="#d8604c" strokeWidth="12" />
      <path d="M64 9A45 45 0 0 1 97 55" fill="none" stroke="#d8604c" strokeWidth="12" />
      <path d="M97 62A45 45 0 0 1 60 100" fill="none" stroke="#e8c84a" strokeWidth="12" />
      <path id="wmArc" d="M8 62A45 45 0 0 0 46 101" fill="none" />
      <text fontSize="8.5" fill="#ffffff" fontWeight="700"><textPath href="#wmArc">www.9m8.cn</textPath></text>
      <path d="M44 2H60L63 16L66 20V34L72 36V58L67 60V72L62 74V104H42V74L36 72V60L32 58V36L38 34V20L41 16Z" fill="#e8c84a" />
      <circle cx="52" cy="9" r="3.5" fill="#7eabd9" />
      <path d="M40 30H64M38 40H66M38 50H66M40 62H64M46 20V56M58 20V56M44 72H60M50 76L46 102M54 76L58 102" stroke="#7eabd9" strokeWidth="2.6" fill="none" />
    </svg>
  );
}

function Banner() {
  return (
    <div className="absolute left-[1081px] top-[1286px] w-[1079px] h-[109px] bg-[#7eabd9] flex items-center overflow-hidden">
      <span className="ml-[20px] w-[414px] shrink-0 text-[76px] leading-[90px] font-black text-[#1b0a8e] mt-[-8px] [font-family:'Noto_Sans_CJK_SC',sans-serif]">公式指标网</span>
      <div className="-ml-[1px]"><BannerLogo /></div>
      <span className="ml-[41px] text-[82px] leading-none font-bold text-white origin-left scale-x-[0.85] [font-family:'DejaVu_Serif',serif] mt-[-10px]">www.9m8.cn</span>
    </div>
  );
}

export default function App() {
  return (
    <div className="relative w-[2160px] h-[1395px] overflow-hidden bg-black flex flex-col [font-family:'Liberation_Sans','Noto_Sans_CJK_SC',sans-serif]">
      <TitleBar />
      <div className="flex flex-1 min-h-0">
        <div className="w-[1787px] shrink-0 flex flex-col">
          <Toolbar />
          <div className="flex h-[723px] shrink-0 border-b-2 border-[#a00000] box-content">
            <div className="w-[1711px] shrink-0">
              <Legend />
              <MainChart />
            </div>
            <div className="relative w-[76px] shrink-0 border-l-2 border-[#a00000] overflow-hidden">
              <Axis vb="1711 67 76 723" h={723} ticks={priceTicks} />
              <div className="absolute left-0 top-[608px] w-[74px] h-[23px] bg-[#00008c] border-y border-[#a00000] text-[#b8c0e8] text-[18px] leading-[21px] pl-[1px]">8.99</div>
            </div>
          </div>
          <div className="flex h-[490px] shrink-0">
            <div className="w-[1711px] shrink-0">
              <IndLegend />
              <IndicatorChart />
            </div>
            <div className="w-[76px] shrink-0 border-l-2 border-[#a00000] overflow-hidden">
              <Axis vb="1711 792 76 490" h={490} ticks={indTicks} />
            </div>
          </div>
          <div className="h-[2px] bg-[#a00000] shrink-0" />
          <DateRow />
          <TabRow h="h-[26px]" pad="pt-[3px]" items={[["指标","w-[46px]"],["模板","w-[44px]"],["管理","w-[48px]","text-[#30e8f0]"],["另存为","w-[65px]"],["绑定到","w-[67px]"],["1","w-[21px]"]]} />
          <TabRow h="h-[27px]" pad="pt-[4px]" items={[["扩展∧","w-[61px]"],["关联报价","w-[84px]"],["资金分布","w-[84px]"],["综合资讯","w-[84px]","text-[#c8c800]"],["行业资讯","w-[84px]","text-[#c8c800]"],["互动问答","w-[84px]","text-[#c8c800]"],["普及版功能说明","w-[138px]"]]} />
        </div>
        <RightPanel />
        <Sidebar />
      </div>
      <StatusBar />
      <Banner />
    </div>
  );
}
